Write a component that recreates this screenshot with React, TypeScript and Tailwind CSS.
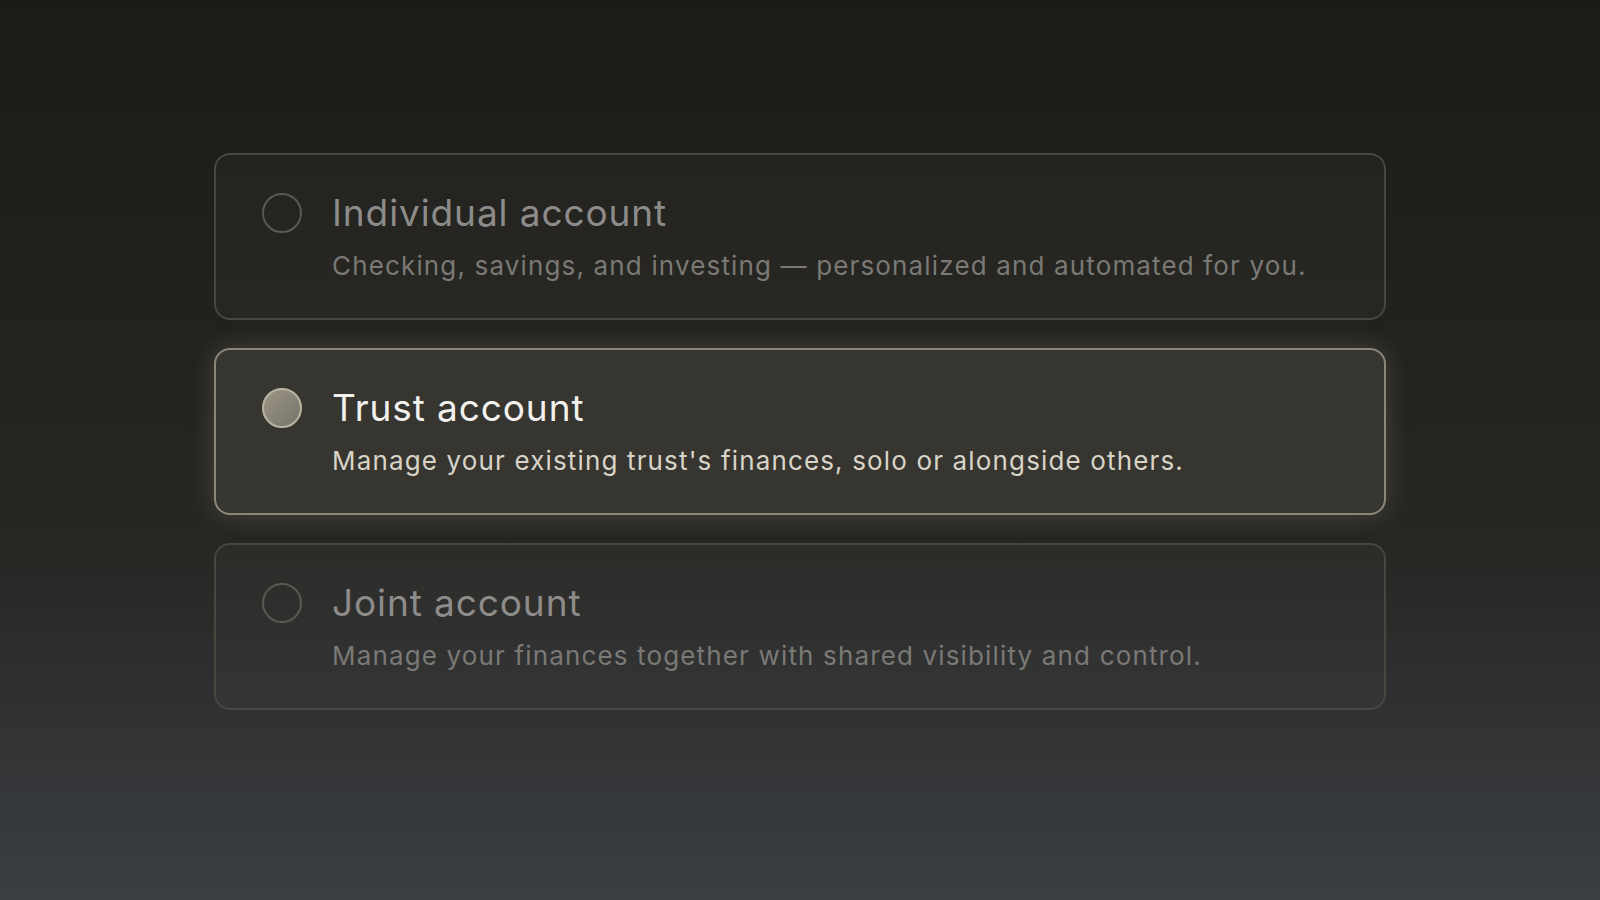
import React, { useState } from 'react';

interface AccountOption {
  id: string;
  title: string;
  description: string;
}

const options: AccountOption[] = [
  {
    id: 'individual',
    title: 'Individual account',
    description: 'Checking, savings, and investing — personalized and automated for you.',
  },
  {
    id: 'trust',
    title: 'Trust account',
    description: "Manage your existing trust's finances, solo or alongside others.",
  },
  {
    id: 'joint',
    title: 'Joint account',
    description: 'Manage your finances together with shared visibility and control.',
  },
];

export default function App() {
  const [selected, setSelected] = useState('trust');

  return (
    <div
      className="min-h-screen w-full bg-linear-to-b from-[#1c1b18] via-[#262623] via-60% to-[#3b3e43]"
      style={{ fontFamily: 'Inter, "Noto Sans", sans-serif' }}
    >
      <div className="mx-auto flex w-[1172px] flex-col gap-[28px] pt-[153px] pb-[189px]">
        {options.map((option) => {
          const active = option.id === selected;
          return (
            <button
              key={option.id}
              onClick={() => setSelected(option.id)}
              className={
                active
                  ? 'flex h-[167px] w-full items-start gap-[30px] rounded-2xl border-2 border-[#8b8676] bg-[#37352f] pt-[36px] pl-[46px] text-left shadow-[0_0_26px_rgba(215,205,175,0.2)]'
                  : 'flex h-[167px] w-full items-start gap-[30px] rounded-2xl border-2 border-[#48463f] bg-white/[0.025] pt-[36px] pl-[46px] text-left'
              }
            >
              <span
                className={
                  active
                    ? 'mt-[2px] block h-10 w-10 shrink-0 rounded-full border-2 border-[#b9b4a2] bg-linear-to-br from-[#9b9686] to-[#77736a]'
                    : 'mt-[2px] block h-10 w-10 shrink-0 rounded-full border-2 border-[#5a5850]'
                }
              />
              <span className="flex flex-col">
                <span
                  className={
                    active
                      ? 'text-[37px] leading-[44px] tracking-[0.9px] text-[#f2f1ee]'
                      : 'text-[37px] leading-[44px] tracking-[0.9px] text-[#8d8c8a]'
                  }
                >
                  {option.title}
                </span>
                <span
                  className={
                    active
                      ? 'mt-[14px] text-[26px] leading-[34px] tracking-[1.15px] text-[#d8d4c8]'
                      : 'mt-[14px] text-[26px] leading-[34px] tracking-[1.15px] text-[#7b7975]'
                  }
                >
                  {option.description}
                </span>
              </span>
            </button>
          );
        })}
      </div>
    </div>
  );
}
